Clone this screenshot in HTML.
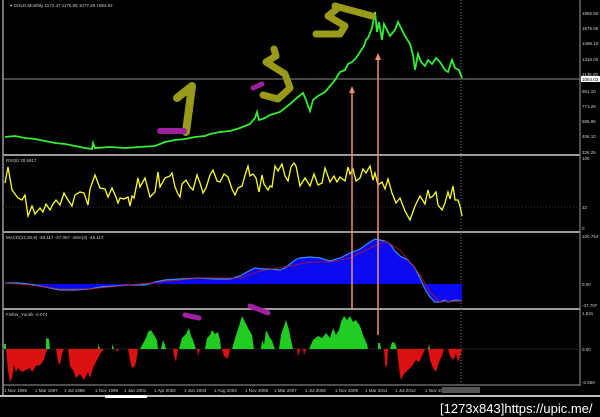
<!DOCTYPE html>
<html><head><meta charset="utf-8"><style>
html,body{margin:0;padding:0;background:#000;width:600px;height:417px;overflow:hidden}
svg{display:block}
text{font-family:"Liberation Sans",sans-serif}
</style></head><body>
<svg width="600" height="417" viewBox="0 0 600 417" xmlns="http://www.w3.org/2000/svg">
<rect width="600" height="417" fill="#000"/>
<g stroke="#9a9a9a" fill="none">
<line x1="3" y1="0" x2="3" y2="396" stroke-width="1.5"/>
<line x1="580" y1="0" x2="580" y2="386"/>
<line x1="3" y1="155" x2="580" y2="155" stroke-width="2"/>
<line x1="3" y1="232" x2="580" y2="232" stroke-width="2"/>
<line x1="3" y1="309" x2="580" y2="309" stroke-width="2"/>
<line x1="3" y1="385" x2="580" y2="385" stroke-width="1"/>
<line x1="0" y1="396" x2="600" y2="396" stroke-width="2" stroke="#bbb"/>
</g>
<rect x="105" y="395" width="42" height="3" fill="#fff"/>
<line x1="3" y1="79" x2="580" y2="79" stroke="#8a8a8a" stroke-width="1"/>
<line x1="461" y1="0" x2="461" y2="385" stroke="#777" stroke-dasharray="1,2"/>
<line x1="3" y1="207" x2="580" y2="207" stroke="#334" stroke-dasharray="1,2"/>
<line x1="3" y1="349" x2="580" y2="349" stroke="#222" />

<polyline fill="none" stroke="#33ee33" stroke-width="1.8" points="5,137 15,136 25,138 35,139 45,141 55,143 65,144 75,146 85,148 92,149 93,143 95,148 110,147 125,148 140,147 155,146 165,142 175,140 185,139 195,137 205,136 210,134 220,132 230,131 240,128 250,124 255,118 257,112 259,120 265,118 270,115 280,112 290,104 298,97 303,93 306,100 308,106 310,111 313,100 318,96 325,92 330,86 335,80 340,72 345,70 348,64 352,62 356,58 360,52 364,46 366,40 368,38 372,28 375,12 377,32 379,22 382,40 384,24 386,28 390,36 395,30 398,22 400,26 405,36 410,44 413,55 415,70 418,54 421,62 425,66 428,60 432,64 436,58 440,62 445,70 448,72 452,60 455,68 459,70 462,78"/>
<text x="10" y="7" fill="#ccc" font-size="4.5">▾ GOLD,Monthly  1172.47 1176.89 1077.25 1084.02</text>

<polyline fill="none" stroke="#ffff22" stroke-width="1.3" points="5,183 8,167 12,190 18,198 22,200 25,195 28,216 32,206 35,214 40,208 43,212 46,204 50,210 53,204 56,200 60,205 64,193 68,200 72,206 75,195 80,192 84,193 88,205 90,189 95,175 100,188 105,189 108,197 112,188 116,197 118,203 120,198 124,199 128,197 130,206 132,196 134,198 138,178 140,187 145,178 150,197 155,192 158,172 160,187 165,178 170,176 172,173 175,187 178,194 180,197 182,184 186,180 190,187 193,190 197,175 200,183 203,193 206,188 210,175 213,170 217,181 220,182 224,174 228,177 232,189 235,195 238,188 242,186 246,172 248,166 250,176 253,174 256,178 259,192 262,175 264,184 268,190 270,186 272,187 275,166 278,171 282,164 285,176 288,181 291,167 294,163 296,166 300,186 305,178 310,186 314,174 318,185 322,183 325,168 330,182 334,176 337,182 340,177 345,181 348,167 350,174 353,169 356,181 360,178 363,169 366,173 370,166 373,180 375,173 378,185 382,182 385,189 388,179 392,193 396,203 400,198 405,211 410,220 415,206 420,196 425,204 428,190 430,198 433,196 436,192 438,205 442,210 445,203 448,192 450,199 453,186 455,200 458,200 460,206 462,216"/>
<text x="6" y="162" fill="#ccc" font-size="4.5">RSI(8) 20.6917</text>

<path fill="#0a0af0" d="M5,284 L5,283 20,283 35,285 50,288 60,290 75,290 90,289 100,287 115,286 130,285 145,285 155,282 165,280 180,279 200,278 215,279 230,279 240,276 247,272 255,268 262,269 270,269 280,270 285,268 290,264 295,260 300,258 310,257 320,258 330,261 340,258 350,253 360,249 370,242 375,239 380,240 385,241 390,244 395,251 400,256 408,260 415,268 420,278 425,289 430,297 435,302 440,302 445,300 448,302 452,301 456,300 462,301 L462,284 Z"/>
<polyline fill="none" stroke="#3a8cff" stroke-width="1.2" points="5,283 20,283 35,285 50,288 60,290 75,290 90,289 100,287 115,286 130,285 145,285 155,282 165,280 180,279 200,278 215,279 230,279 240,276 247,272 255,268 262,269 270,269 280,270 285,268 290,264 295,260 300,258 310,257 320,258 330,261 340,258 350,253 360,249 370,242 375,239 380,240 385,241 390,244 395,251 400,256 408,260 415,268 420,278 425,289 430,297 435,302 440,302 445,300 448,302 452,301 456,300 462,301"/>
<polyline fill="none" stroke="#c01818" stroke-width="0.8" points="5,283 30,285 60,289 90,289 120,286 160,282 200,278 240,278 260,271 290,266 310,262 330,262 350,258 370,248 385,241 400,250 410,262 420,275 430,292 440,302 462,301"/>
<text x="6" y="239" fill="#ccc" font-size="4.5">MACD(12,26,9) -48.117 -47.057  -vMA(3) -48.117</text>

<g fill="#22cc22">
<polygon points="4,349 4,344 6,344 6,349"/>
<polygon points="46,349 46,338 49,339 50,349"/>
<polygon points="98,349 98,344 100,349"/>
<polygon points="112,349 112,344 114,349"/>
<polygon points="140,349 146,338 148,332 151,330 154,335 157,340 158,349"/>
<polygon points="161,349 163,340 165,345 166,349"/>
<polygon points="179,349 182,338 186,334 189,328 191,336 193,340 196,349"/>
<polygon points="205,349 207,338 210,335 212,330 215,334 218,332 220,340 221,349"/>
<polygon points="232,349 236,335 239,326 242,316 245,322 248,328 252,335 254,349"/>
<polygon points="261,349 262,340 264,345 266,330 269,336 272,341 275,349"/>
<polygon points="279,349 281,335 284,326 286,320 289,330 291,340 293,349"/>
<polygon points="309,349 313,340 318,336 322,338 326,333 330,338 333,328 336,335 339,330 341,322 344,316 347,320 350,316 353,322 356,320 360,326 363,335 367,344 368,349"/>
<polygon points="378,349 378,343 380,343 381,349"/>
<polygon points="390,349 392,342 395,343 397,349"/>
<polygon points="428,349 429,344 430,349"/>
</g>
<g fill="#dd1111">
<polygon points="6,349 8,370 10,382 12,378 14,365 16,372 18,368 22,372 26,370 30,368 32,372 36,366 40,365 44,360 46,352 48,349"/>
<polygon points="56,349 58,362 60,365 62,354 64,349"/>
<polygon points="68,349 70,366 73,370 76,378 80,374 84,380 88,372 90,378 93,368 96,362 100,354 104,349"/>
<polygon points="116,349 117,352 119,349"/>
<polygon points="128,349 130,360 132,368 135,366 137,357 138,349"/>
<polygon points="173,349 174,356 176,362 178,349"/>
<polygon points="197,349 198,356 200,349"/>
<polygon points="222,349 224,356 227,359 229,355 230,349"/>
<polygon points="297,349 298,357 300,349"/>
<polygon points="303,349 304,355 306,349"/>
<polygon points="384,349 385,364 387,368 388,349"/>
<polygon points="397,349 399,368 401,380 404,374 408,370 412,366 416,360 419,362 422,356 425,349"/>
<polygon points="428,349 430,360 433,368 436,372 439,362 442,356 444,349"/>
<polygon points="448,349 450,356 453,360 456,354 458,362 460,356 462,349"/>
</g>
<text x="6" y="316" fill="#ccc" font-size="4.5">Fisher_Yur4ik -0.074</text>

<g stroke="#f0906a" stroke-width="1.5">
<line x1="352" y1="90" x2="352" y2="310"/>
<line x1="378" y1="57" x2="378" y2="335"/>
</g>
<polygon points="349,93 352,86 355,93" fill="#f0906a"/>
<polygon points="375,60 378,53 381,60" fill="#f0906a"/>

<g fill="none" stroke-linecap="round" stroke-linejoin="round">
<path d="M177,98 L192,86 L186,132" stroke="#99991a" stroke-width="8"/>
<path d="M160,131 L184,131" stroke="#a020a0" stroke-width="6"/>
<path d="M274,49 L276,56 L266,62 L285,74 L290,88 L278,99 L263,95" stroke="#99991a" stroke-width="7"/>
<path d="M253,88 L262,84" stroke="#a020a0" stroke-width="5"/>
<path d="M335,6 L372,16 M338,8 L328,16 L345,26 L340,34 L316,34" stroke="#99991a" stroke-width="7"/>
<path d="M185,315 L199,318" stroke="#a020a0" stroke-width="5"/>
<path d="M250,306 L268,313" stroke="#a020a0" stroke-width="5"/>
</g>

<g fill="#ccc" font-size="4.5">
<text x="582" y="15">1855.60</text>
<text x="582" y="30">1675.95</text>
<text x="582" y="45">1496.10</text>
<text x="582" y="61">1316.00</text>
<text x="582" y="76">1136.05</text>
<text x="582" y="93">951.10</text>
<text x="582" y="108">771.25</text>
<text x="582" y="123">585.95</text>
<text x="582" y="138">406.10</text>
<text x="582" y="154">226.25</text>
<text x="582" y="160">100</text>
<text x="582" y="209">32</text>
<text x="582" y="230">0</text>
<text x="582" y="238">100.754</text>
<text x="582" y="286">0.00</text>
<text x="582" y="307">-47.797</text>
<text x="582" y="315">1.631</text>
<text x="582" y="351">0.00</text>
<text x="582" y="384">-0.559</text>
</g>
<rect x="581" y="76" width="19" height="6" fill="#fff"/>
<text x="582" y="81" fill="#000" font-size="4.5">1084.02</text>

<g fill="#ccc" font-size="4.5">
<text x="4" y="392">1 Nov 1995</text>
<text x="35" y="392">1 Mar 1997</text>
<text x="64" y="392">1 Jul 1998</text>
<text x="95" y="392">1 Nov 1999</text>
<text x="124" y="392">1 Jan 2001</text>
<text x="154" y="392">1 Apr 2002</text>
<text x="184" y="392">1 Jun 2003</text>
<text x="214" y="392">1 Aug 2004</text>
<text x="245" y="392">1 Nov 2005</text>
<text x="274" y="392">1 Mar 2007</text>
<text x="305" y="392">1 Jul 2008</text>
<text x="335" y="392">1 Nov 2009</text>
<text x="365" y="392">1 Mar 2011</text>
<text x="395" y="392">1 Jul 2012</text>
<text x="425" y="392">1 Nov 20</text>
</g>
<rect x="442" y="387" width="38" height="6" fill="#555"/>

<text x="440" y="413" fill="#fff" font-size="13" font-family="Liberation Sans, sans-serif">[1273x843]https://upic.me/</text>
</svg>
</body></html>
